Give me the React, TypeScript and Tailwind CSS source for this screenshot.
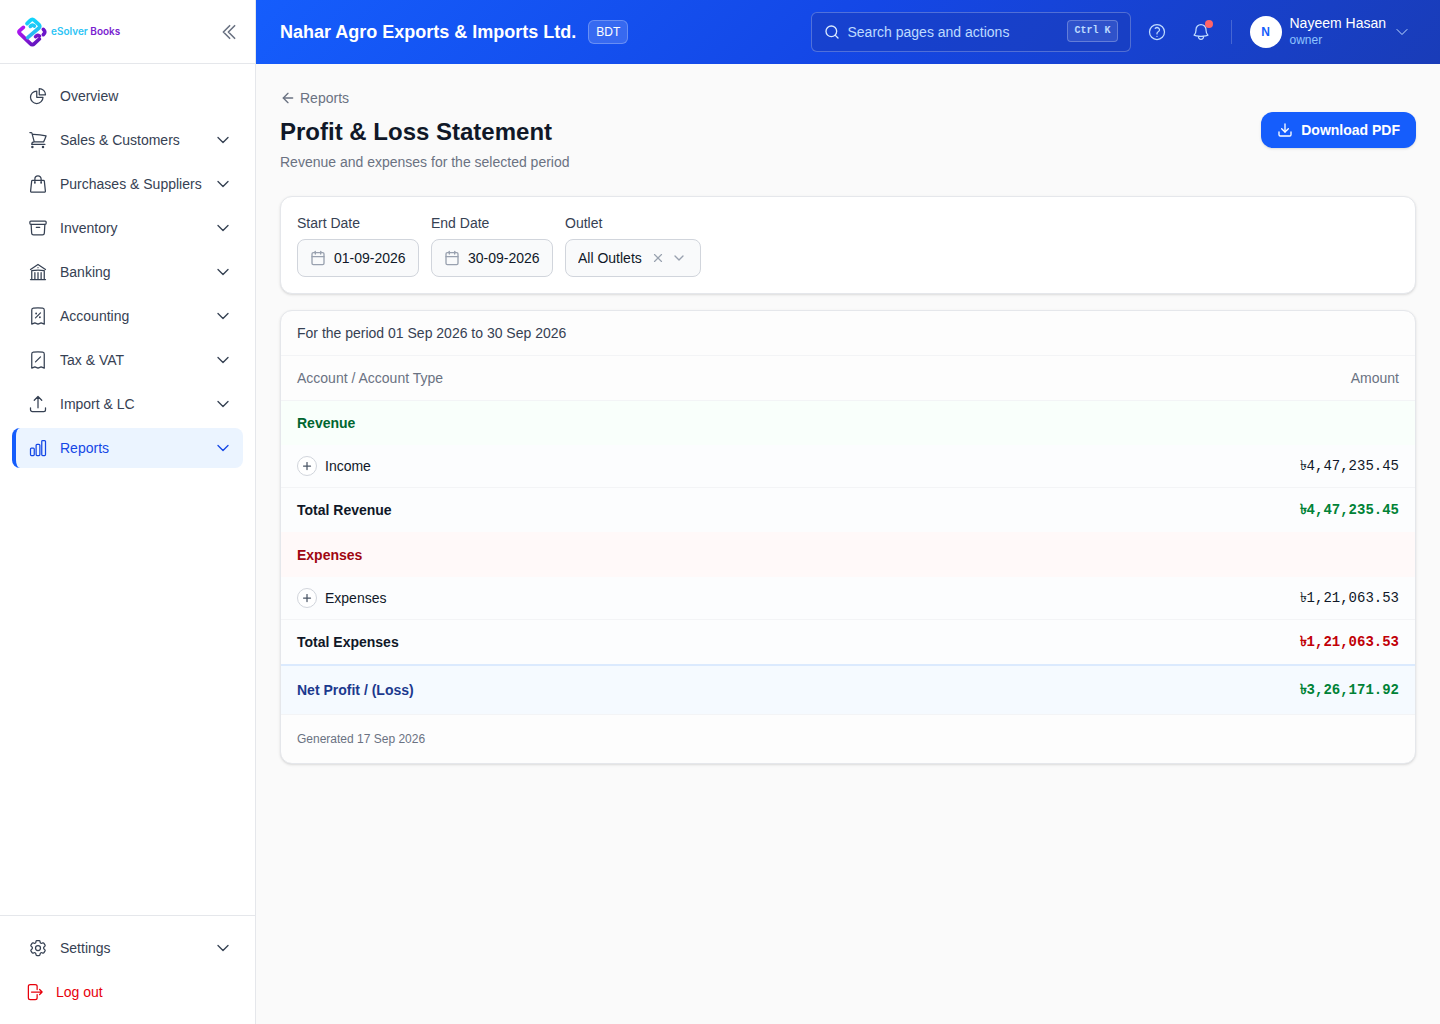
import type { ComponentType } from 'react';
import {
  HiOutlineArchiveBox,
  HiOutlineArrowRightOnRectangle,
  HiOutlineArrowUpTray,
  HiOutlineBell,
  HiOutlineBuildingLibrary,
  HiOutlineChartBar,
  HiOutlineChartPie,
  HiOutlineChevronDoubleLeft,
  HiOutlineChevronDown,
  HiOutlineCog6Tooth,
  HiOutlineQuestionMarkCircle,
  HiOutlineReceiptPercent,
  HiOutlineShoppingBag,
  HiOutlineShoppingCart,
} from 'react-icons/hi2';
import { ArrowLeft, Calendar, ChevronDown, Download, Plus, Search, X } from 'lucide-react';

type IconType = ComponentType<{ className?: string }>;

function TaxIcon({ className }: { className?: string }) {
  return (
    <svg className={className} viewBox="0 0 24 24" fill="none" stroke="currentColor" strokeWidth="1.5" strokeLinecap="round" strokeLinejoin="round">
      <path d="m9 14.25 6-6m4.5-3.493V21.75l-3.75-1.5-3.75 1.5-3.75-1.5-3.75 1.5V4.757c0-1.108.806-2.057 1.907-2.185a48.507 48.507 0 0 1 11.186 0c1.1.128 1.907 1.077 1.907 2.185Z" />
    </svg>
  );
}

const navItems: { label: string; icon: IconType; expandable: boolean; active?: boolean }[] = [
  { label: 'Overview', icon: HiOutlineChartPie, expandable: false },
  { label: 'Sales & Customers', icon: HiOutlineShoppingCart, expandable: true },
  { label: 'Purchases & Suppliers', icon: HiOutlineShoppingBag, expandable: true },
  { label: 'Inventory', icon: HiOutlineArchiveBox, expandable: true },
  { label: 'Banking', icon: HiOutlineBuildingLibrary, expandable: true },
  { label: 'Accounting', icon: HiOutlineReceiptPercent, expandable: true },
  { label: 'Tax & VAT', icon: TaxIcon, expandable: true },
  { label: 'Import & LC', icon: HiOutlineArrowUpTray, expandable: true },
  { label: 'Reports', icon: HiOutlineChartBar, expandable: true, active: true },
];

function Logo() {
  return (
    <a href="#" className="flex items-center gap-[3px]">
      <svg className="size-8" viewBox="0 0 96 96" fill="none" strokeWidth="11" strokeLinecap="round" strokeLinejoin="round">
        <defs>
          <linearGradient id="mark-cyan" x1="0" y1="0" x2="0" y2="1">
            <stop offset="0" stopColor="#12d4fb" />
            <stop offset="1" stopColor="#2fb4f0" />
          </linearGradient>
          <linearGradient id="mark-purple" x1="0" y1="0" x2="1" y2="1">
            <stop offset="0" stopColor="#b316f5" />
            <stop offset="1" stopColor="#5b16b8" />
          </linearGradient>
        </defs>
        <path d="M22 34 11 44q-4 4 0 8l32 31q6 6 12 0l15-14M59 62q5-6 11-2" stroke="url(#mark-purple)" />
        <path d="m33 23 10-10q6-6 12 0l14 13q5 5 0 10L35 65M43 31q7-7 12-1" stroke="url(#mark-cyan)" />
        <path d="M82 40q9 8 0 16" stroke="#6b16c8" />
      </svg>
      <span className="font-[Inter,sans-serif] text-[10px] font-semibold text-[#7a1fd0]">
        <span className="text-[#2cc4f5]">eSolver</span> Books
      </span>
    </a>
  );
}

function NavItem({ label, icon: Icon, expandable, active }: { label: string; icon: IconType; expandable: boolean; active?: boolean }) {
  return (
    <a
      href="#"
      className={
        active
          ? 'flex h-10 items-center gap-3 rounded-lg border-l-4 border-[#155dfc] bg-[#ebf4ff] px-3 text-[#1447e6]'
          : 'flex h-10 items-center gap-3 rounded-lg border-l-4 border-transparent px-3 text-[#364153]'
      }
    >
      <Icon className="size-5 shrink-0" />
      <span className="flex-1 whitespace-nowrap">{label}</span>
      {expandable && <HiOutlineChevronDown className="size-4 shrink-0 [stroke-width:2]" />}
    </a>
  );
}

function Sidebar() {
  return (
    <aside className="flex w-64 shrink-0 flex-col border-r border-gray-200 bg-white">
      <div className="flex h-16 items-center justify-between border-b border-gray-200 px-4">
        <Logo />
        <button type="button" aria-label="Collapse sidebar" className="text-gray-500">
          <HiOutlineChevronDoubleLeft className="size-5 [stroke-width:2]" />
        </button>
      </div>
      <nav className="flex flex-1 flex-col gap-1 p-3">
        {navItems.map((item) => (
          <NavItem key={item.label} {...item} />
        ))}
      </nav>
      <div className="flex flex-col gap-1 border-t border-gray-200 p-3">
        <NavItem label="Settings" icon={HiOutlineCog6Tooth} expandable />
        <button type="button" className="flex h-10 items-center gap-3 px-3 text-[#e7000b]">
          <HiOutlineArrowRightOnRectangle className="size-5" />
          Log out
        </button>
      </div>
    </aside>
  );
}

function Header() {
  return (
    <header className="flex h-16 items-center justify-between bg-linear-135 from-[#155dfc] via-[#1447e6] to-[#193cb8] px-6 text-white">
      <div className="flex items-center gap-3">
        <h2 className="text-lg font-bold">Nahar Agro Exports &amp; Imports Ltd.</h2>
        <span className="rounded-md border border-white/25 bg-white/15 px-[7px] py-[3px] text-xs leading-4">BDT</span>
      </div>
      <div className="flex items-center">
        <div className="flex h-10 w-80 items-center gap-2 rounded-md border border-white/25 bg-[#193cb8]/50 px-3">
          <Search className="size-4 shrink-0 text-blue-100" />
          <input
            type="text"
            aria-label="Search pages and actions"
            placeholder="Search pages and actions"
            className="min-w-0 flex-1 bg-transparent outline-none placeholder:text-blue-200"
          />
          <kbd className="mb-0.5 rounded-sm border border-white/25 bg-white/10 px-1.5 py-0.5 font-['Liberation_Mono',monospace] text-[10px] leading-4 font-bold text-blue-200">
            Ctrl K
          </kbd>
        </div>
        <button type="button" aria-label="Help" className="ml-2 flex size-9 items-center justify-center text-blue-200">
          <HiOutlineQuestionMarkCircle className="size-5" />
        </button>
        <button type="button" aria-label="Notifications" className="relative ml-2 flex size-9 items-center justify-center text-blue-200">
          <HiOutlineBell className="size-5" />
          <span className="absolute top-1.5 right-1.5 size-2 rounded-full bg-[#ff6467]" />
        </button>
        <span className="ml-3 h-6 w-px bg-white/20" />
        <button type="button" className="ml-[18px] flex items-center gap-2 pr-1.5 text-left">
          <span className="flex size-8 items-center justify-center rounded-full bg-white text-xs font-bold text-[#155dfc]">N</span>
          <span className="mb-0.5">
            <span className="block leading-[18px]">Nayeem Hasan</span>
            <span className="block text-xs leading-4 text-blue-300">owner</span>
          </span>
          <HiOutlineChevronDown className="size-4 text-blue-200" />
        </button>
      </div>
    </header>
  );
}

function DateField({ id, label, value }: { id: string; label: string; value: string }) {
  return (
    <div className="flex flex-col gap-1.5">
      <label htmlFor={id} className="text-[#364153]">{label}</label>
      <div className="flex h-[38px] items-center gap-2 rounded-lg border border-gray-300 bg-gray-50 px-3">
        <Calendar className="size-4 shrink-0 text-gray-400" />
        <input id={id} type="text" defaultValue={value} className="w-[72px] bg-transparent text-[#101828] outline-none" />
      </div>
    </div>
  );
}

function Filters() {
  return (
    <section className="flex gap-3 rounded-xl border border-gray-200 bg-white p-4 shadow-sm">
      <DateField id="start-date" label="Start Date" value="01-09-2026" />
      <DateField id="end-date" label="End Date" value="30-09-2026" />
      <div className="flex flex-col gap-1.5">
        <label htmlFor="outlet" className="text-[#364153]">Outlet</label>
        <div className="relative">
          <select id="outlet" className="h-[38px] w-[136px] appearance-none rounded-lg border border-gray-300 bg-gray-50 px-3 text-[#101828] outline-none">
            <option>All Outlets</option>
          </select>
          <span className="pointer-events-none absolute inset-y-0 right-3.5 flex items-center gap-1.5 text-gray-400">
            <button type="button" aria-label="Clear outlet" className="pointer-events-auto">
              <X className="size-3.5" />
            </button>
            <ChevronDown className="size-4" />
          </span>
        </div>
      </div>
    </section>
  );
}

function AccountRow({ label, amount }: { label: string; amount: string }) {
  return (
    <tr className="h-[43px] border-b border-gray-100 bg-[#fcfdfe]">
      <td className="px-4">
        <div className="flex items-center gap-2">
          <button type="button" aria-label={`Expand ${label}`} className="flex size-5 items-center justify-center rounded-full border border-gray-300 bg-white text-gray-600">
            <Plus className="size-3" strokeWidth={2.5} />
          </button>
          {label}
        </div>
      </td>
      <td className="px-4 text-right font-['Liberation_Mono',monospace]">{amount}</td>
    </tr>
  );
}

function Statement() {
  return (
    <section className="overflow-hidden rounded-xl border border-gray-200 bg-[#fdfdfd] shadow-sm">
      <p className="border-b border-gray-100 px-4 py-3 text-[#364153]">For the period 01 Sep 2026 to 30 Sep 2026</p>
      <table className="w-full border-separate border-spacing-0 text-[#101828] [&_tr.border-b>td]:border-b [&_tr.border-b>td]:border-gray-100">
        <thead>
          <tr className="h-[45px] text-[#6a7282]">
            <th className="border-b border-gray-100 px-4 text-left font-normal">Account / Account Type</th>
            <th className="border-b border-gray-100 px-4 text-right font-normal">Amount</th>
          </tr>
        </thead>
        <tbody>
          <tr className="h-11 bg-[#f9fffb]">
            <th colSpan={2} className="px-4 text-left font-bold text-[#016630]">Revenue</th>
          </tr>
          <AccountRow label="Income" amount="৳4,47,235.45" />
          <tr className="h-11 bg-[#fcfdfe] font-bold">
            <td className="px-4">Total Revenue</td>
            <td className="px-4 text-right font-['Liberation_Mono',monospace] text-[#008236]">৳4,47,235.45</td>
          </tr>
          <tr className="h-[45px] bg-[#fff9f9]">
            <th colSpan={2} className="px-4 text-left font-bold text-[#9f0712]">Expenses</th>
          </tr>
          <AccountRow label="Expenses" amount="৳1,21,063.53" />
          <tr className="h-11 bg-[#fcfdfe] font-bold">
            <td className="px-4">Total Expenses</td>
            <td className="px-4 text-right font-['Liberation_Mono',monospace] text-[#c10007]">৳1,21,063.53</td>
          </tr>
          <tr className="h-[51px] bg-[#f5faff] font-bold">
            <td className="border-t-2 border-b border-t-blue-100 border-b-gray-100 px-4 text-[#1c398e]">Net Profit / (Loss)</td>
            <td className="border-t-2 border-b border-t-blue-100 border-b-gray-100 px-4 text-right font-['Liberation_Mono',monospace] text-[#008236]">৳3,26,171.92</td>
          </tr>
        </tbody>
      </table>
      <p className="p-4 text-xs text-[#6a7282]">Generated 17 Sep 2026</p>
    </section>
  );
}

export default function App() {
  return (
    <div className="flex min-h-screen bg-[#fafafa] font-['Liberation_Sans',Arial,sans-serif] text-sm">
      <Sidebar />
      <div className="min-w-0 flex-1">
        <Header />
        <main className="flex flex-col gap-4 p-6">
          <div className="mb-2 flex items-center justify-between">
            <div>
              <a href="#" className="flex items-center gap-1 text-[#6a7282]">
                <ArrowLeft className="size-4" />
                Reports
              </a>
              <h1 className="mt-2 text-2xl font-bold text-[#101828]">Profit &amp; Loss Statement</h1>
              <p className="mt-1 text-[#6a7282]">Revenue and expenses for the selected period</p>
            </div>
            <button type="button" className="flex h-9 items-center gap-2 rounded-xl bg-[#155dfc] px-4 font-bold text-white shadow-sm">
              <Download className="size-4" />
              Download PDF
            </button>
          </div>
          <Filters />
          <Statement />
        </main>
      </div>
    </div>
  );
}
